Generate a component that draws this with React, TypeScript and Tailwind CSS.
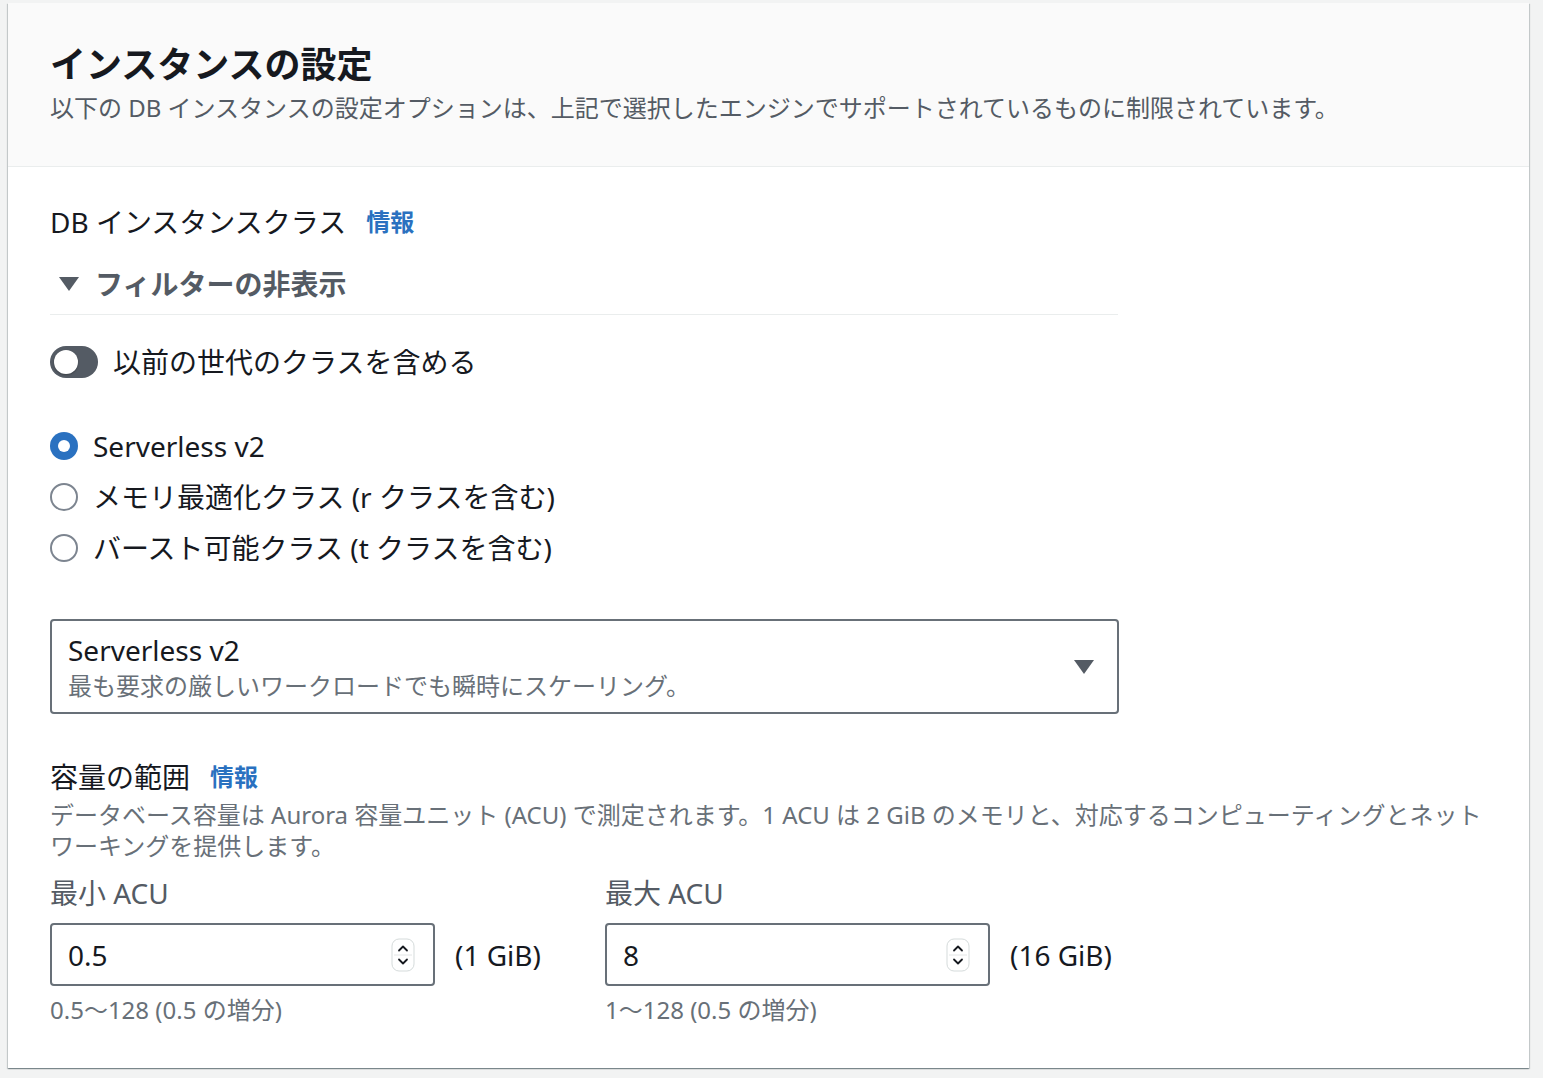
import type { ReactNode } from "react"

const font = { fontFamily: '"Noto Sans", "Noto Sans CJK JP", sans-serif' }

function InfoLink() {
  return <span className="text-[24px] font-bold leading-[40px] text-[#2a71c0]">情報</span>
}

function Radio({ checked, children }: { checked?: boolean; children: ReactNode }) {
  return (
    <div className="flex h-[51px] items-center">
      {checked ? (
        <span className="flex h-[28px] w-[28px] items-center justify-center rounded-full bg-[#2a71c0]">
          <span className="h-[12px] w-[12px] rounded-full bg-white" />
        </span>
      ) : (
        <span className="h-[28px] w-[28px] rounded-full border-2 border-[#7d8590] bg-white" />
      )}
      <span className="ml-[15px] text-[28px] leading-[40px] text-[#16191f]">{children}</span>
    </div>
  )
}

function Spinner() {
  return (
    <svg width="24" height="34" viewBox="0 0 24 34" className="shrink-0">
      <rect x="1" y="1" width="22" height="32" rx="7" fill="#fff" stroke="#d5dbdb" strokeWidth="1" />
      <line x1="3" y1="17" x2="21" y2="17" stroke="#e3e6e6" strokeWidth="1" />
      <path d="M8 12.5 L12 8.5 L16 12.5" fill="none" stroke="#16191f" strokeWidth="1.8" strokeLinecap="round" strokeLinejoin="round" />
      <path d="M8 21.5 L12 25.5 L16 21.5" fill="none" stroke="#16191f" strokeWidth="1.8" strokeLinecap="round" strokeLinejoin="round" />
    </svg>
  )
}

function AcuField({ label, value, size, hint }: { label: string; value: string; size: string; hint: string }) {
  return (
    <div className="flex flex-col">
      <div className="text-[28px] leading-[40px] text-[#545b64]">{label}</div>
      <div className="mt-[10px] flex items-center">
        <div className="flex h-[63px] w-[385px] items-center rounded-[4px] border-2 border-[#687078] pl-[16px] pr-[18px]">
          <span className="flex-1 text-[28px] text-[#16191f]">{value}</span>
          <Spinner />
        </div>
        <span className="ml-[20px] text-[28px] text-[#16191f]">{size}</span>
      </div>
      <div className="mt-[8px] text-[24px] leading-[32px] text-[#687078]">{hint}</div>
    </div>
  )
}

export default function App() {
  return (
    <div className="min-h-screen bg-[#f2f3f3] pl-[8px] pt-[3px]" style={font}>
      <div className="h-[1065px] w-[1521px] bg-white shadow-[0_1px_1px_0_rgba(0,28,36,0.3),1px_1px_1px_0_rgba(0,28,36,0.15),-1px_1px_1px_0_rgba(0,28,36,0.15)]">
        <div className="border-b border-[#eaeded] bg-[#fafafa] px-[42px] pb-[42px] pt-[40px]">
          <h2 className="text-[36px] font-bold leading-[44px] text-[#16191f]">インスタンスの設定</h2>
          <p className="mt-[5px] text-[24px] leading-[32px] text-[#545b64]">
            以下の DB インスタンスの設定オプションは、上記で選択したエンジンでサポートされているものに制限されています。
          </p>
        </div>

        <div className="px-[42px] pt-[35px]">
          <div className="flex items-center gap-[20px]">
            <span className="text-[28px] leading-[40px] text-[#16191f]">DB インスタンスクラス</span>
            <InfoLink />
          </div>

          <div className="mt-[22px] w-[1068px] border-b border-[#eaeded] pb-[10px]">
            <div className="flex items-center">
              <svg width="22" height="16" viewBox="0 0 22 16" className="ml-[8px]">
                <path d="M1 1 H21 L11 15 Z" fill="#545b64" />
              </svg>
              <span className="ml-[15px] text-[28px] font-bold leading-[40px] text-[#545b64]">フィルターの非表示</span>
            </div>
          </div>

          <div className="mt-[27px] flex items-center">
            <span className="relative h-[32px] w-[48px] rounded-full bg-[#545b64]">
              <span className="absolute left-[4px] top-[4px] h-[24px] w-[24px] rounded-full bg-white shadow-[0_1px_2px_rgba(0,0,0,0.3)]" />
            </span>
            <span className="ml-[15px] text-[28px] leading-[40px] text-[#16191f]">以前の世代のクラスを含める</span>
          </div>

          <div className="mt-[38px] flex flex-col">
            <Radio checked>Serverless v2</Radio>
            <Radio>メモリ最適化クラス (r クラスを含む)</Radio>
            <Radio>バースト可能クラス (t クラスを含む)</Radio>
          </div>

          <div className="mt-[46px] flex h-[95px] w-[1069px] items-center rounded-[4px] border-2 border-[#687078] pl-[16px] pr-[22px]">
            <div className="flex flex-1 flex-col">
              <span className="text-[28px] leading-[36px] text-[#16191f]">Serverless v2</span>
              <span className="mt-[2px] text-[24px] leading-[32px] text-[#687078]">
                最も要求の厳しいワークロードでも瞬時にスケーリング。
              </span>
            </div>
            <svg width="22" height="16" viewBox="0 0 22 16">
              <path d="M1 1 H21 L11 15 Z" fill="#545b64" />
            </svg>
          </div>

          <div className="mt-[43px] flex items-center gap-[20px]">
            <span className="text-[28px] leading-[40px] text-[#16191f]">容量の範囲</span>
            <InfoLink />
          </div>
          <p className="mt-[2px] text-[24px] leading-[31px] text-[#687078]">
            データベース容量は Aurora 容量ユニット (ACU) で測定されます。1 ACU は 2 GiB のメモリと、対応するコンピューティングとネット
            <br />
            ワーキングを提供します。
          </p>

          <div className="mt-[12px] flex">
            <div className="w-[555px]">
              <AcuField label="最小 ACU" value="0.5" size="(1 GiB)" hint="0.5〜128 (0.5 の増分)" />
            </div>
            <AcuField label="最大 ACU" value="8" size="(16 GiB)" hint="1〜128 (0.5 の増分)" />
          </div>
        </div>
      </div>
    </div>
  )
}
